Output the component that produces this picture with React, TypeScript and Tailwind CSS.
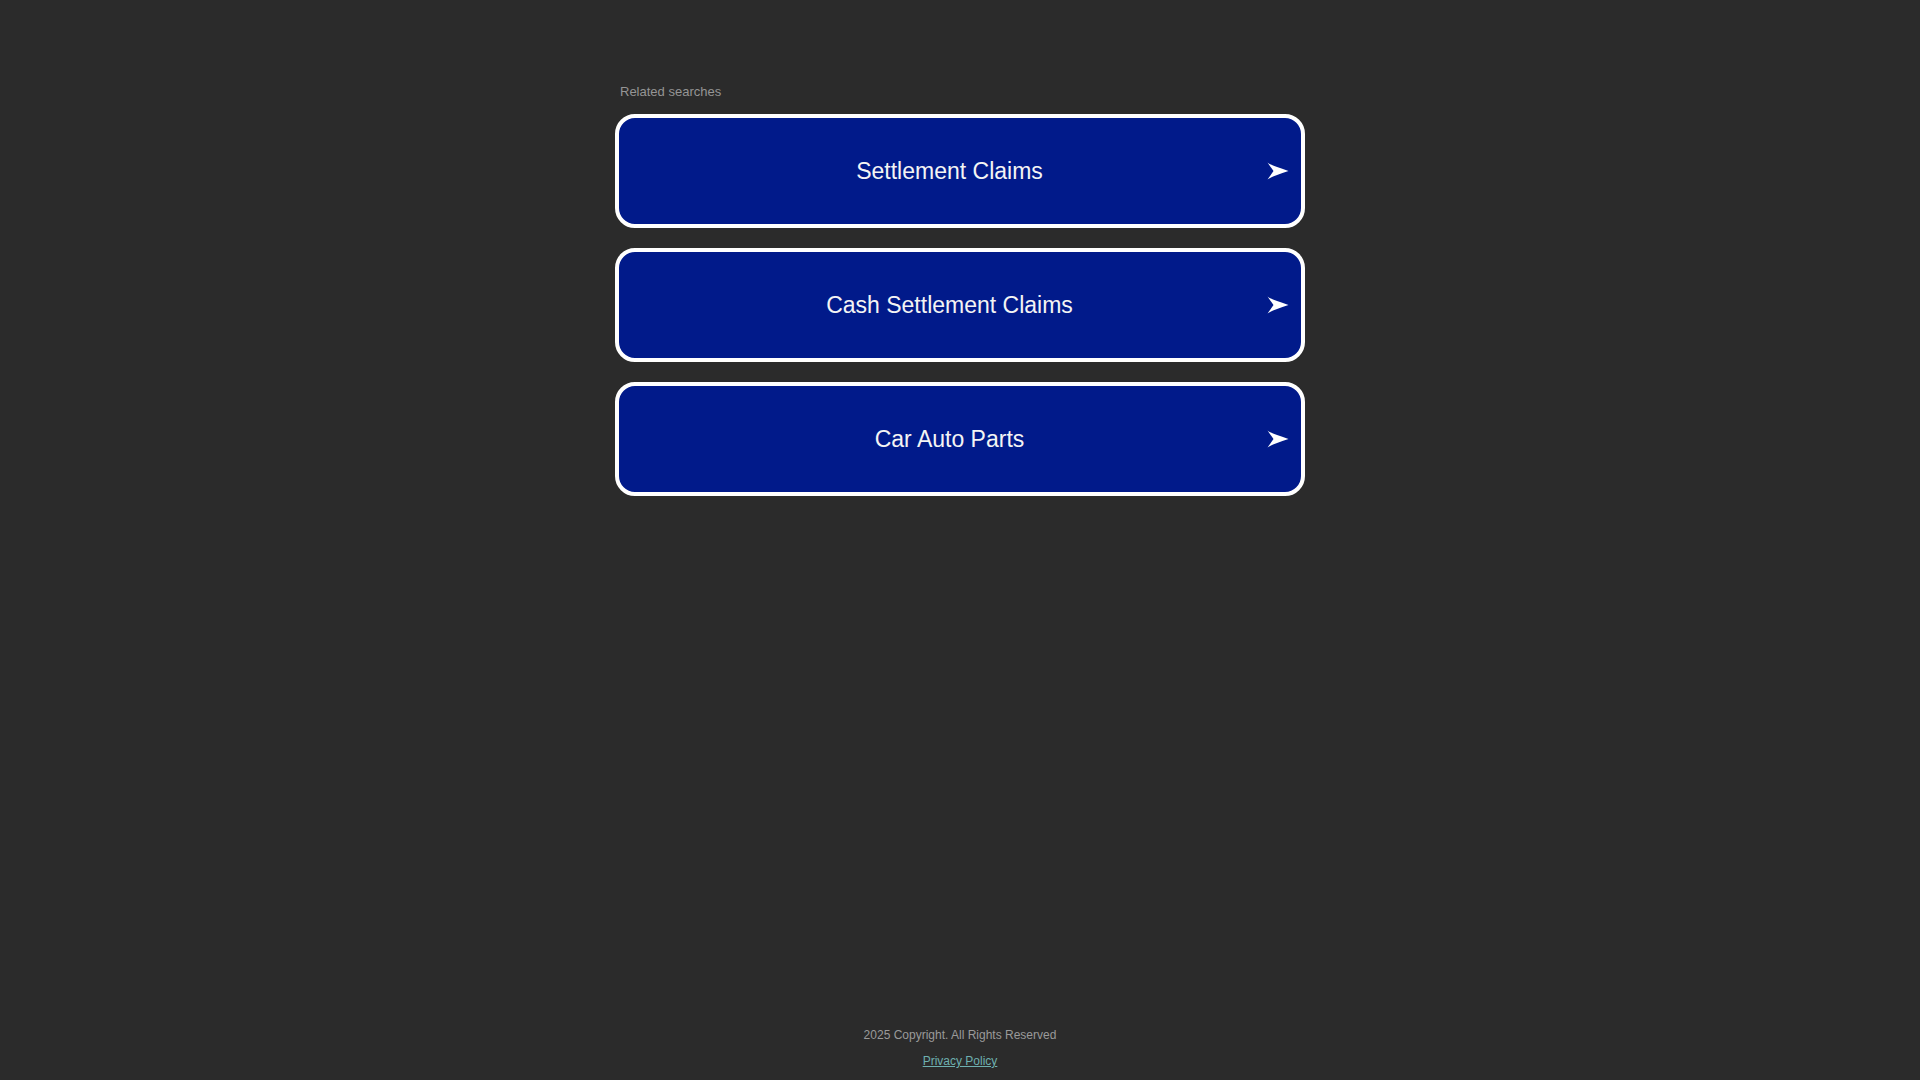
import React from 'react';

const searches = ['Settlement Claims', 'Cash Settlement Claims', 'Car Auto Parts'];

const Arrow: React.FC = () => (
  <svg width="22" height="18" viewBox="0 0 22 18" className="shrink-0">
    <path d="M0.5 0.5 Q3 3 21.5 9 Q3 15 0.5 17.5 L6.5 9 Z" fill="#ffffff" />
  </svg>
);

const App: React.FC = () => {
  return (
    <div className="flex flex-col min-h-screen bg-[#2b2b2b] font-['Liberation_Sans',Arial,sans-serif]">
      {/* Related searches block */}
      <main className="w-[690px] mx-auto pt-[84px]">
        <p className="pl-[5px] text-[13px] leading-[15px] text-[#959595] mb-[15px]">Related searches</p>
        <div className="flex flex-col gap-[20px]">
          {searches.map((s) => (
            <a
              key={s}
              href="#"
              className="flex items-center h-[114px] pl-[13px] pr-[12px] bg-[#011a8a] border-4 border-white rounded-[20px] text-[#f4f4f4] text-[23px]"
            >
              <span className="flex-1 text-center">{s}</span>
              <Arrow />
            </a>
          ))}
        </div>
      </main>

      <footer className="mt-auto pb-[11px] flex flex-col items-center gap-[11px] text-[12px] leading-[15px]">
        <p className="text-[#9a9a9a]">2025 Copyright. All Rights Reserved</p>
        <a href="#" className="text-[#6eb0b0] underline">Privacy Policy</a>
      </footer>
    </div>
  );
};

export default App;
